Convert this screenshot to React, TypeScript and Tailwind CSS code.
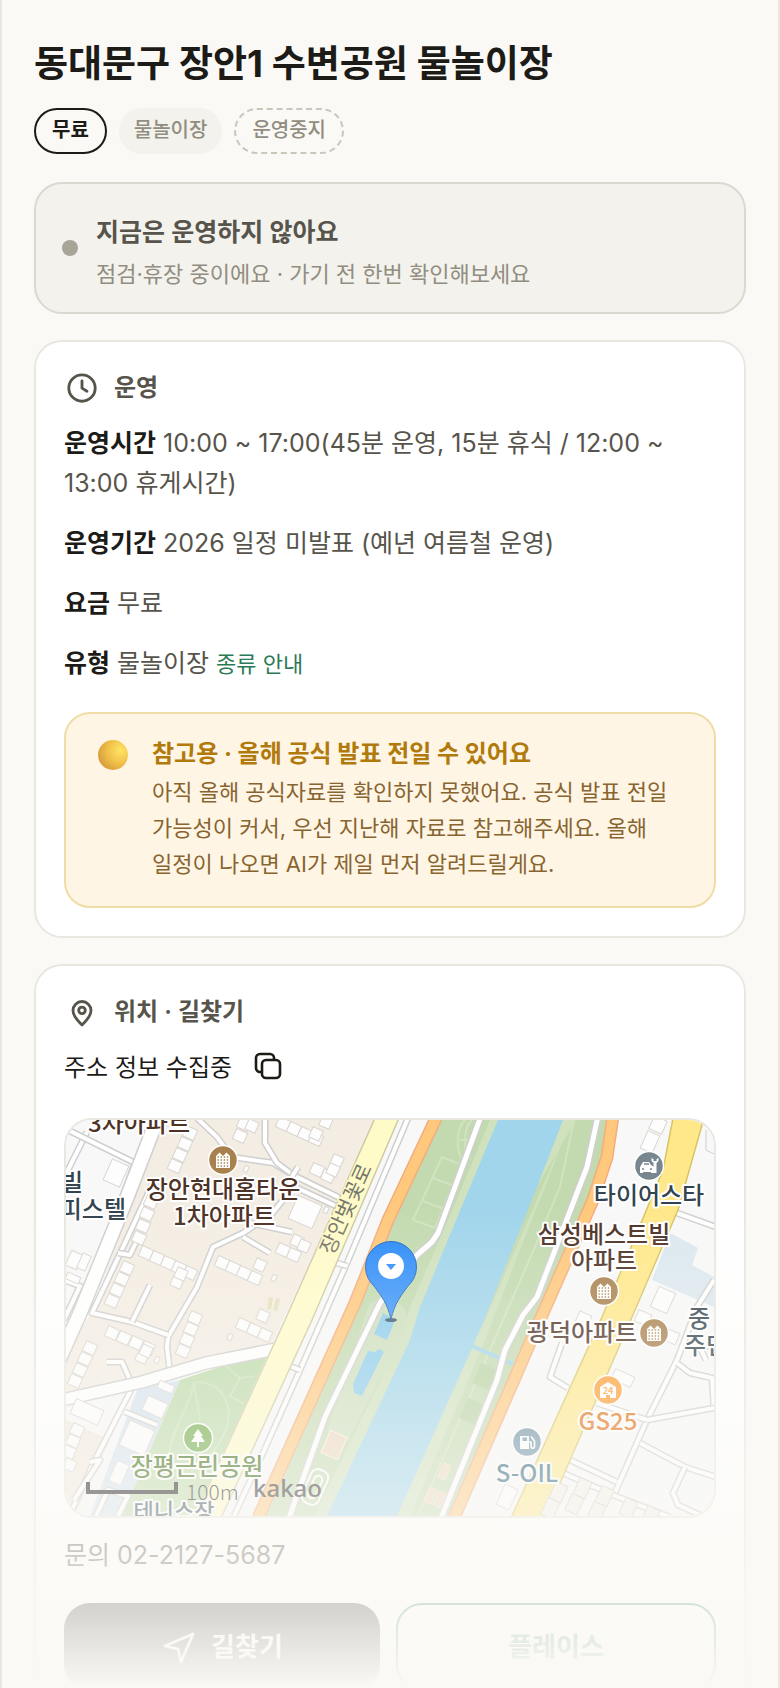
import type { ReactNode } from 'react';

type Point = [number, number];

type Building = {
  x: number;
  y: number;
  w: number;
  h: number;
};

// rows of houses: first centre, step to the next one, how many
type HouseRow = {
  start: Point;
  step: Point;
  count: number;
};

const houseRows: HouseRow[] = [
  { start: [124, 13], step: [-5, 11], count: 4 },
  { start: [89, 70], step: [-4, 12], count: 5 },
  { start: [61, 148], step: [-5, 11], count: 4 },
  { start: [129, 198], step: [-4, 11], count: 4 },
  { start: [24, 228], step: [-5, 11], count: 4 },
  { start: [11, 310], step: [-4, 11], count: 3 },
  { start: [80, 133], step: [11, 5], count: 5 },
  { start: [156, 143], step: [11, 5], count: 4 },
  { start: [217, 4], step: [11, 5], count: 4 },
  { start: [178, 4], step: [-4, 12], count: 2 },
  { start: [46, 213], step: [12, 5], count: 4 },
  { start: [251, 50], step: [11, 6], count: 2 },
  { start: [217, 130], step: [11, 5], count: 2 },
  { start: [177, 205], step: [11, 5], count: 3 },
];

const houses: Point[] = [
  [111, 162], [115, 154], [194, 145], [271, 41], [267, 50], [231, 121], [238, 126],
  [76, 237], [80, 231], [197, 196], [186, 6], [4, 345], [250, 14], [260, 2],
];

const buildings: Building[] = [
  { x: 239, y: 92, w: 26, h: 25 },
  { x: 50, y: 53, w: 18, h: 23 },
  { x: 89, y: 287, w: 22, h: 16 },
  { x: 71, y: 318, w: 27, h: 27 },
  { x: 53, y: 353, w: 13, h: 22 },
  { x: 21, y: 292, w: 30, h: 16 },
  { x: 100, y: 267, w: 16, h: 8 },
  { x: 592, y: 5, w: 14, h: 14 },
  { x: 584, y: 22, w: 13, h: 19 },
  { x: 597, y: 180, w: 18, h: 22 },
  { x: 557, y: 258, w: 21, h: 11 },
  { x: 441, y: 377, w: 14, h: 22 },
  { x: 577, y: 198, w: 14, h: 12 },
  { x: 517, y: 200, w: 13, h: 14 },
  { x: 606, y: 217, w: 12, h: 12 },
  { x: 8, y: 140, w: 12, h: 16 },
  { x: 18, y: 142, w: 9, h: 16 },
  { x: 7, y: 158, w: 14, h: 7 },
  { x: 260, y: 90, w: 4, h: 6 },
  { x: 180, y: 49, w: 4, h: 6 },
  { x: 208, y: 158, w: 4, h: 6 },
  { x: 164, y: 217, w: 4, h: 6 },
  { x: 91, y: 240, w: 4, h: 6 },
];

const lanes = [
  '131,-2 151,17 166,37 207,43 227,55 274,78',
  '199,-2 199,23 211,43 227,55',
  '227,66 274,88',
  '232,47 227,55 217,80 205,95 177,113 147,127 131,167 102,217 101,227 104,253',
  '184,103 226,112',
  '177,117 204,133',
  '87,63 51,140 26,193 66,202 102,215',
  '52,133 64,135 72,118',
  '84,165 66,202',
  '21,12 -2,58',
  '-2,8 69,43 45,110 14,180',
  '-2,160 14,166 -2,200',
  '41,242 56,242 64,260',
  '66,268 28,342 5,392',
  '59,292 91,305',
  '24,342 34,340 8,380',
  '30,396 42,370 62,376 52,396',
  '342,-2 281,143 234,250 197,333 168,396',
  '267,142 281,146',
  '221,245 234,250',
  '648,160 631,187 611,240 581,300 547,377',
  '611,243 624,253 646,258 648,290',
  '581,300 648,288',
  '531,283 581,300',
  '574,323 619,347 650,357',
  '504,340 551,362',
  '497,353 547,375 604,397',
  '619,347 607,373 612,385 634,395',
  '496,223 484,257 502,268',
  '611,93 650,107',
  '640,240 634,228 650,224',
];

// small yards of the block in the bottom right corner
const yards: Point[] = [
  [492, 372], [484, 388], [516, 368], [508, 384], [538, 376], [530, 392], [562, 388], [584, 396],
];

function ClockIcon() {
  return (
    <svg className="size-9 shrink-0" viewBox="0 0 24 24" fill="none" stroke="currentColor" strokeWidth="1.9" strokeLinecap="round" strokeLinejoin="round">
      <circle cx="12" cy="12" r="8.8" />
      <path d="M12 7.2v4.900l3.300 2.100" />
    </svg>
  );
}

function PinIcon() {
  return (
    <svg className="size-9 shrink-0" viewBox="0 0 24 24" fill="none" stroke="currentColor" strokeWidth="1.9" strokeLinejoin="round">
      <path d="M12 20.6s-6-5.2-6-9.6a6 6 0 0 1 12 0c0 4.400-6 9.600-6 9.600z" />
      <circle cx="12" cy="10.9" r="2.2" />
    </svg>
  );
}

function CopyIcon() {
  return (
    <svg className="size-7" viewBox="0 0 28 28" fill="none" stroke="currentColor" strokeWidth="2.6" strokeLinejoin="round">
      <rect x="8" y="8" width="18" height="18" rx="4" />
      <path d="M8 20H6a4 4 0 0 1-4-4V6a4 4 0 0 1 4-4h10a4 4 0 0 1 4 4v2" />
    </svg>
  );
}

function SendIcon() {
  return (
    <svg className="size-9 shrink-0" viewBox="0 0 36 36" fill="none" stroke="currentColor" strokeWidth="2.8" strokeLinejoin="round">
      <path d="M32 5 4 17l13 3 3 13z" />
    </svg>
  );
}

function Lane({ points, width = 4 }: { points: string; width?: number }) {
  return (
    <>
      <polyline points={points} fill="none" stroke="#cfcfcf" strokeWidth={width + 3} strokeLinejoin="round" />
      <polyline points={points} fill="none" stroke="#ffffff" strokeWidth={width} strokeLinejoin="round" />
    </>
  );
}

function Block({ x, y, w, h }: Building) {
  return (
    <rect x={x - w / 2} y={y - h / 2} width={w} height={h} transform={`rotate(24 ${x} ${y})`} fill="#fdfdfd" stroke="#d9d5d0" />
  );
}

function Label({ x, y, color, anchor = 'middle', size = 24, children }: {
  x: number; y: number; color: string; anchor?: 'start' | 'middle' | 'end'; size?: number; children: ReactNode;
}) {
  return (
    <text x={x} y={y} fill={color} textAnchor={anchor} fontSize={size} fontWeight="500" stroke="#ffffff" strokeWidth="4" strokeLinejoin="round" paintOrder="stroke">
      {children}
    </text>
  );
}

function Badge({ x, y, color, children }: { x: number; y: number; color: string; children: ReactNode }) {
  return (
    <g transform={`translate(${x} ${y})`}>
      <circle r="14.5" fill={color} stroke="#ffffff" strokeWidth="1.5" />
      {children}
    </g>
  );
}

function ApartmentBadge({ x, y }: { x: number; y: number }) {
  return (
    <Badge x={x} y={y} color="#a9814f">
      <path d="M-7 8V-4l3.500-3.500L0-4l3.500-3.500L7-4V8z" fill="#ffffff" />
      {[-3, 0, 3, 6].map((row) => (
        <path key={row} d={`M-5.5 ${row}h11`} stroke="#a9814f" strokeWidth="1.4" strokeDasharray="1.4 1.7" />
      ))}
    </Badge>
  );
}

function KakaoMap() {
  return (
    <svg
      className="block h-full w-full"
      viewBox="0 0 648 396"
      preserveAspectRatio="xMidYMid slice"
      role="img"
      aria-label="지도"
      fontFamily="'Noto Sans CJK KR', sans-serif"
    >
      <rect width="648" height="396" fill="#f8f8f8" />
      <path d="M94 0h216L204 228 0 273v-42l27-40z" fill="#f4ede3" />
      <path d="M0 300 44 320 8 396H0z" fill="#f3e9dd" />
      <path d="M71 270 114 260 56 396H24z" fill="#d5e3ee" />
      <path d="M114 260 204 230 129 396H56z" fill="#bddaa8" />
      <g fill="none" stroke="#cbe2ba" strokeWidth="2">
        <path d="M128 262c-4 30-28 50-26 90M130 262c20 0 36 14 32 40-4 20-14 24-18 40M128 262l6 38" />
        <path d="m160 246 14 12 14-2M174 258l-10 18 14 8" />
      </g>
      <path d="M604 113 632 128 626 145 648 157V187L586 160z" fill="#dce8ef" />

      {/* river banks */}
      <path d="M369 0H546L541 37 527 80 477 193 389 396H193L289 183 322 100z" fill="#c3dab0" />
      <path d="M424 0 380 105 344 187 334 220 248 396h30L510 0z" fill="#cfe1bd" />
      <path d="M505 0 479 67 455 127 416 228 344 396h-30L420 198z" fill="#cfe1bd" />
      <path d="M432 0h65L471 67 447 127 419 198 406 228 331 396H261L344 220 354 187 386 110z" fill="#a1d5eb" />
      <g fill="none" stroke="#d1e2c1" strokeWidth="2">
        <path d="m376 37 20 8-27 63-22-8zM367 58l21 8M357 81l21 8" />
        <path d="M400 0c-10 4-12 34 0 44M406 0c-8 6-10 30-2 40M393 20h16" />
        <path d="m508 0-14 67-26 62-54 124-62 143" />
      </g>
      <path d="M303 184c14-8 38-4 38 14 0 20-40 80-58 122l-22-8z" fill="#cddfbd" />
      <path d="m317 193 12 7-8 20-13-6z" fill="#8ecdec" />
      <path d="m302 231 7 1 4-3 5 3-22 44-8-3-1-9z" fill="#8ecdec" />
      <path d="m406 226 41 18" stroke="#a1d5eb" strokeWidth="4" />
      <g transform="rotate(24 268 325)">
        <rect x="259" y="313" width="18" height="24" fill="#ecd8bd" stroke="#f9e8da" strokeWidth="1.5" />
      </g>
      <g transform="rotate(24 249 367)" fill="none" stroke="#ffffff" strokeWidth="2">
        <rect x="240" y="349" width="18" height="36" rx="7" />
        <rect x="245" y="355" width="8" height="24" rx="4" />
      </g>
      <g fill="#b8d3a3">
        <path d="m415 243 21 9-9 20-21-9zM402 278l21 9-9 20-21-9z" />
      </g>
      <g fill="#ecd8bd" stroke="#f9e3d2">
        <path d="m378 343 7 3-6 14-7-3zM364 367l7 3-6 14-7-3zM373 371l7 3-6 14-7-3z" />
      </g>

      {lanes.map((points) => (
        <Lane key={points} points={points} />
      ))}
      <Lane points="94,-8 60,80 14,193 -8,242" width={13} />
      <Lane points="-4,280 76,262 140,243 210,229" width={11} />
      <Lane points="415,-4 389,67 372,113 366,122 351,135 314,183 259,297 223,398" width={5} />
      <Lane points="532,-4 521,47 471,177 457,195 439,230 431,260 375,398" width={5} />

      <polyline points="371,-4 322,100 289,183 192,398" fill="none" stroke="#f3ac7c" strokeWidth="13" />
      <polyline points="371,-4 322,100 289,183 192,398" fill="none" stroke="#ffc87c" strokeWidth="10" />
      <polyline points="547,-4 541,37 527,80 477,193 388,398" fill="none" stroke="#f3ac7c" strokeWidth="13" />
      <polyline points="547,-4 541,37 527,80 477,193 388,398" fill="none" stroke="#ffc87c" strokeWidth="10" />
      <path d="M309-2h24L246 200 155 398H128L219 200z" fill="#fffbc9" stroke="#cfcaa4" strokeWidth="1.5" />
      <path d="M607-2 597 50 536 197 445 398h34L566 197 612 90 638-2z" fill="#ffe88a" stroke="#d8c463" strokeWidth="1.5" />

      <g fill="#f5f0e8" stroke="#d2cec8">
        {yards.map(([x, y]) => (
          <rect key={`${x}-${y}`} x={x - 6} y={y - 9} width="13" height="18" transform={`rotate(24 ${x} ${y})`} />
        ))}
      </g>
      {houseRows.map(({ start, step, count }) =>
        Array.from({ length: count }, (_, i) => (
          <Block key={`${start}-${i}`} x={start[0] + step[0] * i} y={start[1] + step[1] * i} w={12} h={11} />
        ))
      )}
      {houses.map(([x, y]) => (
        <Block key={`${x}-${y}`} x={x} y={y} w={11} h={11} />
      ))}
      {buildings.map((b) => (
        <Block key={`${b.x}-${b.y}`} {...b} />
      ))}
      <path d="m203 177 4 1-2 12-4-1zM210 178l4 1-3 12-4-1z" fill="#e6e0bd" />
      <path d="M640 10v20l8 4" fill="none" stroke="#d0d0d0" />

      <text transform="translate(267 136) rotate(-66)" fill="#77776a" fontSize="21" stroke="#fffbc9" strokeWidth="3" paintOrder="stroke">
        장안벚꽃로
      </text>

      <Label x={73} y={12} color="#4d3226">3차아파트</Label>
      <Label x={17} y={71} color="#33444f" anchor="end">빌</Label>
      <Label x={60} y={98} color="#33444f" anchor="end">피스텔</Label>
      <ApartmentBadge x={157} y={40} />
      <Label x={157} y={78} color="#4d3226">장안현대홈타운</Label>
      <Label x={158} y={105} color="#4d3226">1차아파트</Label>

      <Badge x={583} y={46} color="#77868f">
        <path d="M-9 7V1l3-5h6l2 3 3 2v6h-3v-1h-8v1z" fill="#ffffff" />
        <path d="M-5-2h5M-7 3h2M1 3h2" stroke="#77868f" strokeWidth="1.5" />
        <path d="M2.500-8v3l2 2v10h3V-3l2-2v-3l-2 1v2h-3v-2z" fill="#ffffff" />
      </Badge>
      <Label x={583} y={84} color="#33444f">타이어스타</Label>
      <Label x={538} y={123} color="#4d3226">삼성베스트빌</Label>
      <Label x={538} y={149} color="#4d3226">아파트</Label>
      <ApartmentBadge x={538} y={171} />
      <Label x={516} y={221} color="#4d3226">광덕아파트</Label>
      <ApartmentBadge x={588} y={213} />
      <Label x={622} y={207} color="#33444f" anchor="start">중·</Label>
      <Label x={618} y={234} color="#33444f" anchor="start">주민</Label>

      <Badge x={542} y={270} color="#fd9a2c">
        <path d="M-8 8V-3l8-5 8 5V8H2V5h-4v3z" fill="#ffffff" />
        <text y="4" textAnchor="middle" fontSize="9" fontWeight="700" fill="#fd9a2c">24</text>
      </Badge>
      <Label x={542} y={310} color="#e26a08">GS25</Label>
      <Badge x={461} y={322} color="#6a8fa5">
        <path d="M-7 7V-6h9V7z" fill="#ffffff" />
        <path d="M-4.500-4.500h4.500v3.500h-4.500z" fill="#6a8fa5" />
        <path d="M2 0h2v4c0 3 3.500 3 3.500 0v-5L4-5.500" fill="none" stroke="#ffffff" strokeWidth="1.7" />
      </Badge>
      <Label x={461} y={362} color="#235d76">S-OIL</Label>

      <Badge x={132} y={318} color="#6ca943">
        <path d="m0-9 5 7H3l4 6H1v5h-2V4h-6l4-6h-2z" fill="#ffffff" />
      </Badge>
      <Label x={131} y={355} color="#346607">장평근린공원</Label>
      <Label x={108} y={399} color="#2c4450" size={22}>테니스장</Label>

      <path d="M22 362v10h88v-10" fill="none" stroke="#0a0a0a" strokeWidth="4" />
      <text x="120" y="380" fontSize="21" fontWeight="300" fill="#111111">100m</text>
      <text x="187" y="377" fontSize="24" fontWeight="500" fill="#222222" fontFamily="'Noto Sans', sans-serif">kakao</text>

      {/* place marker */}
      <defs>
        <linearGradient id="marker" x1="0" y1="0" x2="0" y2="1">
          <stop offset="0" stopColor="#2b8bf8" />
          <stop offset="1" stopColor="#3f97fb" />
        </linearGradient>
      </defs>
      <ellipse cx="325" cy="200" rx="6" ry="2" fill="#3c5a6e" />
      <path d="M325 199c-4-16-9-22-17-33a25.500 25.500 0 1 1 34 0c-8 11-13 17-17 33z" fill="url(#marker)" stroke="#2367b8" />
      <circle cx="325" cy="146" r="13" fill="#ffffff" />
      <path d="M320 144h10l-5 6z" fill="#2f8ef8" />
    </svg>
  );
}

function Card({ icon, title, children }: { icon: ReactNode; title: string; children: ReactNode }) {
  return (
    <section className="mt-[26px] rounded-[28px] border-2 border-[#e9e7e0] bg-white p-7">
      <h2 className="flex items-center gap-3.5 text-2xl leading-9 font-semibold text-[#57544b]">
        {icon}
        {title}
      </h2>
      {children}
    </section>
  );
}

function InfoRow({ label, children }: { label: string; children: ReactNode }) {
  return (
    <p>
      <b className="font-semibold text-[#1c1b17]">{label}</b> {children}
    </p>
  );
}

export default function App() {
  return (
    <div className="relative h-screen overflow-hidden border-x-2 border-[#e9e7e0] bg-[#faf9f5] px-8 font-['Inter','Noto_Sans_CJK_KR',sans-serif] break-keep text-[#1c1b17]">
      <h1 className="pt-10 text-[37px] leading-[48px] font-bold">동대문구 장안1 수변공원 물놀이장</h1>

      <div className="mt-5 flex gap-3 text-xl leading-6">
        <span className="rounded-full border-2 border-[#1c1b17] px-4 pt-2 pb-2.5 font-semibold">무료</span>
        <span className="rounded-full border-2 border-[#f3f2ed] bg-[#f3f2ed] px-[13px] pt-2 pb-2.5 font-medium text-[#918d80]">물놀이장</span>
        <span className="rounded-full border-2 border-dashed border-[#c9c6ba] px-4 pt-2 pb-2.5 font-medium text-[#918d80]">운영중지</span>
      </div>

      <section className="mt-7 flex items-center gap-[18px] rounded-[28px] border-2 border-[#dad8cf] bg-[#f3f2ed] px-[26px] py-4">
        <span className="size-4 shrink-0 rounded-full bg-[#a8a498]" />
        <div className="pt-3">
          <p className="text-[25px] leading-10 font-semibold text-[#57544b]">지금은 운영하지 않아요</p>
          <p className="text-[22px] leading-11 text-[#918d80]">점검·휴장 중이에요 · 가기 전 한번 확인해보세요</p>
        </div>
      </section>

      <Card icon={<ClockIcon />} title="운영">
        <div className="mt-[17px] flex flex-col gap-5 text-[25px] leading-10 text-[#57544b]">
          <InfoRow label="운영시간">10:00 ~ 17:00(45분 운영, 15분 휴식 / 12:00 ~ 13:00 휴게시간)</InfoRow>
          <InfoRow label="운영기간">2026 일정 미발표 (예년 여름철 운영)</InfoRow>
          <InfoRow label="요금">무료</InfoRow>
          <InfoRow label="유형">
            물놀이장 <a href="#types" className="text-[22px] text-[#2c7a55]">종류 안내</a>
          </InfoRow>
        </div>

        <div className="mt-7 flex gap-6 rounded-[26px] border-2 border-[#f0dca6] bg-[#fff5e4] px-8 py-5">
          <span className="mt-1.5 size-[30px] shrink-0 rounded-full bg-[radial-gradient(circle_at_75%_35%,#ffe566_0%,#f0bf48_45%,#d9a03c_75%,#cf7a62_100%)]" />
          <div className="pb-1">
            <p className="text-2xl leading-10 font-bold text-[#b07a0c]">참고용 · 올해 공식 발표 전일 수 있어요</p>
            <p className="text-[22px] leading-9 text-[#876430]">
              아직 올해 공식자료를 확인하지 못했어요. 공식 발표 전일 가능성이 커서, 우선 지난해 자료로 참고해주세요. 올해 일정이 나오면 AI가 제일 먼저 알려드릴게요.
            </p>
          </div>
        </div>
      </Card>

      <Card icon={<PinIcon />} title="위치 · 길찾기">
        <div className="mt-[18px] flex items-center gap-[22px] text-2xl leading-10">
          <p>주소 정보 수집중</p>
          <button type="button" aria-label="주소 복사" className="mb-1">
            <CopyIcon />
          </button>
        </div>

        <div className="mt-[30px] h-[400px] overflow-hidden rounded-[28px] border-2 border-[#e9e7e0]">
          <KakaoMap />
        </div>

        <p className="mt-[17px] text-[25px] leading-10 text-[#57544b]">문의 02-2127-5687</p>

        <div className="mt-7 flex gap-4 text-[26px] leading-10 font-bold">
          <button type="button" className="flex flex-1 items-center justify-center gap-3.5 rounded-[26px] bg-[#1c1b17] py-6 text-white">
            <SendIcon />
            길찾기
          </button>
          <button type="button" className="flex-1 rounded-[26px] border-2 border-[#2c7a55] py-5 text-[#2c7a55]">
            플레이스
          </button>
        </div>
      </Card>

      <div className="pointer-events-none absolute -inset-x-0.5 bottom-0 h-[480px] bg-linear-to-b from-[#faf9f5]/0 to-[#faf9f5]" />
    </div>
  );
}
